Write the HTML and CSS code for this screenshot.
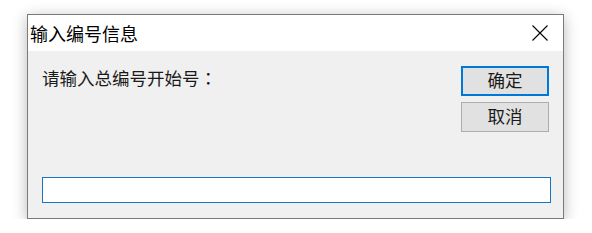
FILE: index.html
```html
<!DOCTYPE html>
<html>
<head lang="zh">
    <meta charset="UTF-8">
    <title>输入编号信息</title>
    <link rel="stylesheet" href="styles.css">
</head>
<body>
<div class="dialog">
    <div class="titlebar">
        <span class="title">输入编号信息</span>
        <svg class="close" width="16" height="16" viewBox="0 0 16 16">
            <path d="M0.5 0.5L15.5 15.5M15.5 0.5L0.5 15.5" stroke="#000" stroke-width="1.1" fill="none"/>
        </svg>
    </div>
    <div class="panel">
        <div class="top">
            <div class="prompt">请输入总编号开始号<span class="colon">：</span></div>
            <div class="buttons">
                <div class="btn default">确定</div>
                <div class="btn">取消</div>
            </div>
        </div>
        <div class="field"></div>
    </div>
</div>
</body>
</html>
```

FILE: styles.css
```css
*{
    margin: 0;
    padding: 0;
    box-sizing: border-box;
}
body{
    background: #fff;
    font-family: "Noto Sans CJK SC", "Noto Sans", sans-serif;
    color: #000;
}
.dialog{
    width: 537px;
    height: 205px;
    margin: 14px 0 0 27px;
    border: 1px solid #7a7a7a;
    box-shadow: 0 3px 14px rgba(0,0,0,0.28);
    display: flex;
    flex-direction: column;
    background: #f0f0f0;
}
.titlebar{
    height: 36px;
    background: #fff;
    display: flex;
    align-items: center;
    justify-content: space-between;
    padding: 0 15px 0 2px;
}
.title{
    font-size: 18px;
    line-height: 20px;
    color: #000;
}
.close{
    display: block;
}
.panel{
    flex: 1;
    display: flex;
    flex-direction: column;
    justify-content: space-between;
    padding: 15px 12px 15px 14px;
}
.top{
    display: flex;
    justify-content: space-between;
}
.prompt{
    font-size: 17.5px;
    line-height: 20px;
    padding-top: 2px;
    color: #1a1a1a;
}
.colon{
    font-family: "Noto Sans CJK JP", sans-serif;
}
.buttons{
    display: flex;
    flex-direction: column;
    gap: 6px;
    margin-right: 2px;
}
.btn{
    width: 88px;
    height: 30px;
    background: #e1e1e1;
    border: 1px solid #adadad;
    font-size: 17.5px;
    line-height: 26px;
    text-align: center;
    color: #1a1a1a;
}
.btn.default{
    border: 2px solid #0078d7;
    line-height: 24px;
}
.field{
    height: 26px;
    background: #fff;
    border: 1px solid #1874c0;
}
```
